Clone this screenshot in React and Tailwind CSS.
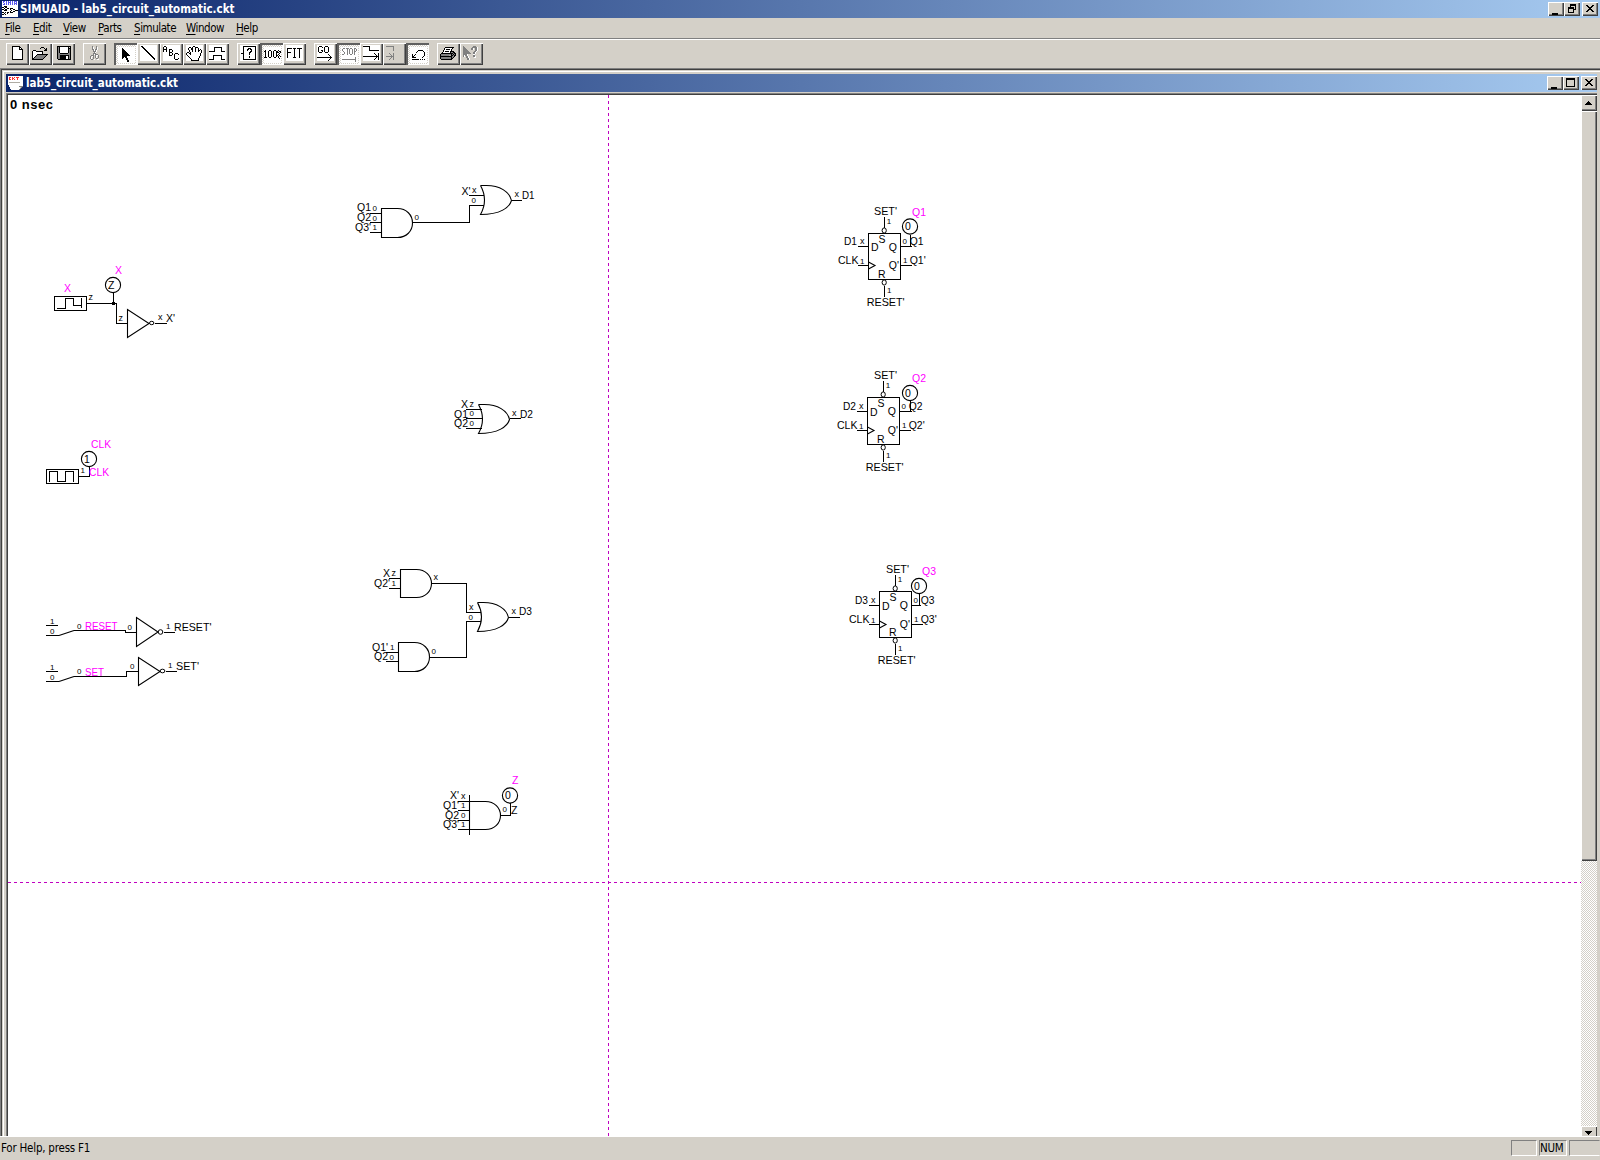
import React from "react";

const UI = "font-['DejaVu_Sans_Condensed','DejaVu_Sans',sans-serif]";

/* ---------- pixel icons ---------- */
const INK = { "#": "#000000", w: "#ffffff", g: "#808080", s: "#d4d0c8", b: "#5a5af0", r: "#ff3030", t: "#b0aca4" };

function Pix({ rows, className = "" }) {
  const w = Math.max(...rows.map((r) => r.length));
  const rects = [];
  rows.forEach((row, y) => {
    let x = 0;
    while (x < row.length) {
      const c = row[x];
      let n = 1;
      while (x + n < row.length && row[x + n] === c) n++;
      if (INK[c]) rects.push(<rect key={x + "-" + y} x={x} y={y} width={n} height="1" fill={INK[c]} />);
      x += n;
    }
  });
  return (
    <svg width={w} height={rows.length} viewBox={`0 0 ${w} ${rows.length}`} shapeRendering="crispEdges" className={"block shrink-0 " + className}>
      {rects}
    </svg>
  );
}

const ICONS = {
  new: [
    "########...",
    "#wwwwww##..",
    "#wwwwww#w#.",
    "#wwwwww####",
    "#wwwwwwwww#",
    "#wwwwwwwww#",
    "#wwwwwwwww#",
    "#wwwwwwwww#",
    "#wwwwwwwww#",
    "#wwwwwwwww#",
    "#wwwwwwwww#",
    "#wwwwwwwww#",
    "#wwwwwwwww#",
    "###########",
  ],
  open: [
    ".........###....",
    "........#...#.#.",
    ".............##.",
    ".###........###.",
    "#www#######.....",
    "#wwwwwwwww#.....",
    "#wwwwwwwww#.....",
    "#wwww###########",
    "#www#ggggggggg#.",
    "#ww#ggggggggg#..",
    "#w#ggggggggg#...",
    "##ggggggggg#....",
    "###########.....",
  ],
  save: [
    "##############",
    "#g#wwwwwwww#s#",
    "#g#wwwwwwww###",
    "#g#wwwwwwww#g#",
    "#g#wwwwwwww#g#",
    "#g#wwwwwwww#g#",
    "#g#wwwwwwww#g#",
    "#gg########gg#",
    "#gggggggggggg#",
    "#gg#########g#",
    "#gg######ww#g#",
    "#gg######ww#g#",
    "#gg######ww#g#",
    ".#############",
  ],
  cut: [
    "..g...g..",
    "..gw..gw.",
    "..gw..gw.",
    "..ggwggw.",
    "...gwgw..",
    "...gggw..",
    "....gw...",
    "...ggg...",
    "...gwggg.",
    ".ggg.gwwg",
    "g.wg.gw.g",
    "gw.g.gw.g",
    "gw.g..gg.",
    ".gg.w..ww",
  ],
  arrow: [
    "#........",
    "##.......",
    "###......",
    "####.....",
    "#####....",
    "######...",
    "#######..",
    "########.",
    "#####....",
    "##.##....",
    "#...##...",
    "....##...",
    ".....##..",
    ".....##..",
  ],
  line: [
    "##............",
    ".##...........",
    "..##..........",
    "...##.........",
    "....##........",
    ".....##.......",
    "......##......",
    ".......##.....",
    "........##....",
    ".........##...",
    "..........##..",
    "...........##.",
    "............##",
    ".............#",
  ],
  abc: [
    ".##.............",
    "#..#............",
    "#..#............",
    "####..###.......",
    "#..#..#..#......",
    "#..#..#..#......",
    "......###.......",
    "......#..#..###.",
    "......#..#.#...#",
    "......###..#....",
    "...........#....",
    "...........#....",
    "...........#...#",
    "............###.",
  ],
  hand: [
    ".......##.......",
    "...##.#ww###....",
    "..#ww##ww#ww#...",
    "..#ww##ww#ww#.#.",
    "...#ww#ww#ww##w#",
    "...#ww#ww#ww#ww#",
    ".##.#wwwwwwwwww#",
    "#ww##wwwwwwwww#.",
    "#www#wwwwwwwww#.",
    ".#wwwwwwwwwwww#.",
    "..#wwwwwwwwww#..",
    "...#wwwwwwwww#..",
    "....#wwwwwww#...",
    ".....#wwwwww#...",
    ".....########...",
  ],
  wave: [
    ".....########...",
    ".....#......#...",
    ".....#......#...",
    ".....#......#...",
    "######......####",
    "................",
    "................",
    "................",
    "....#########...",
    "....#.......#...",
    "....#.......#...",
    "....#.......#...",
    "#####.......####",
  ],
  probe: [
    "..#############",
    "..#...........#",
    "..#....###....#",
    "..#...##.##...#",
    "..#...#...#...#",
    "..#......##...#",
    "..#.....##....#",
    "###.....#.....#",
    "..#.....#.....#",
    "..#...........#",
    "..#.....#.....#",
    "..#.....#.....#",
    "..#...........#",
    "..#############",
  ],
  hundred: [
    ".#...##...##..#..",
    "##..#..#.#..##.##",
    ".#..#..#.#..###.#",
    ".#..#..#.#..#..#.",
    ".#..#..#.#..#.#..",
    ".#..#..#.#..##.#.",
    ".#..#..#.#..#.#.#",
    "###..##...##..#..",
    "...............#.",
  ],
  fit: [
    "#####.###.#####",
    "#......#....#..",
    "#......#....#..",
    "#......#....#..",
    "####...#....#..",
    "#......#....#..",
    "#......#....#..",
    "#......#....#..",
    "#......#....#..",
    "#.....###...#..",
  ],
  go: [
    "..###...###.....",
    ".#...#.#...#....",
    ".#.....#...#....",
    ".#.....#...#....",
    ".#..##.#...#....",
    ".#...#.#...#....",
    "..###...###.....",
    "................",
    "...........#....",
    "............#...",
    ".............#..",
    "###############.",
    ".............#..",
    "............#...",
    "...........#....",
  ],
  stop: [
    ".gg.ggg.gg..gg.",
    "g....g.g..g.g.g",
    "g....g.g..g.g.g",
    ".g...g.g..g.gg.",
    "..g..g.g..g.g..",
    "..g..g.g..g.g..",
    "gg...g..gg..g..",
    "...............",
    "...............",
    ".............g.",
    ".............g.",
    "gggggggggggggg.",
    ".............g.",
    ".............g.",
  ],
  step: [
    "#######.........",
    "......#.........",
    "......#.........",
    "......#.........",
    "......##########",
    "................",
    "................",
    "...........#...#",
    "............#..#",
    ".............#.#",
    "################",
    ".............#.#",
    "............#..#",
    "...........#...#",
  ],
  stepOff: [
    "gggggggg........",
    ".......g........",
    ".......g........",
    ".......g........",
    ".......g........",
    "................",
    "................",
    "...g...g........",
    "....g..g........",
    ".....g.g........",
    "gggggggg........",
    ".....g.g........",
    "....g..g........",
    "...g...g........",
  ],
  undo: [
    "......#####...",
    ".....#.....#..",
    "....#.......#.",
    "............#.",
    "#..#........#.",
    "#.#.........#.",
    "##.........#..",
    "####......#...",
    "..............",
    "#######.#.#.#.",
  ],
  print: [
    ".....#########..",
    "....#wwwwwww#...",
    "....#w####w#....",
    "...#wwwwwww#....",
    "...#w####w####..",
    "..#wwwwwww#gg##.",
    ".############g##",
    "#gggggggggg#g#g#",
    "#ggggggggtt##g##",
    "############gg#.",
    "#gggggggggg#g#..",
    "#gggggggggg##...",
    ".###########....",
  ],
  help: [
    "g.........ggg...",
    "gg.......gggggw.",
    "ggg.....ggw.ggw.",
    "gggg....ggw.ggw.",
    "ggggg.......ggw.",
    "gggggg.....ggw..",
    "ggggggg...ggw...",
    "gggggggg..ggw...",
    "ggggw.....ww....",
    "gwggw.....gg....",
    "gw.ggw....ggw...",
    "...ggw.....ww...",
    "....ggw.........",
    "....ggw.........",
  ],
  min: ["......", "......", "......", "......", "......", "######", "######"],
  max: [
    "#########",
    "#########",
    "#.......#",
    "#.......#",
    "#.......#",
    "#.......#",
    "#.......#",
    "#.......#",
    "#########",
  ],
  restore: [
    "..######",
    "..######",
    "..#....#",
    "######.#",
    "######.#",
    "#....###",
    "#....#..",
    "#....#..",
    "######..",
  ],
  close: ["##....##", ".##..##.", "..####..", "...##...", "..####..", ".##..##.", "##....##"],
  up: ["...#...", "..###..", ".#####.", "#######"],
  down: ["#######", ".#####.", "..###..", "...#..."],
  app: [
    "wbbwbwbwbwbwbbbw",
    "wbwwbwbbbwbwbwbw",
    "wwbwbwbwbwbwbbbw",
    "wbbwbwbwbwbwbwbw",
    "wwwwwwwwwwwwwwww",
    "ww###wwwwwwwwwww",
    "##w##wwwwwwwwwww",
    "ww#ww##w###wwwww",
    "##w##www#ww##www",
    "ww###wwww#www###",
    "wwwwwwww#ww##www",
    "##w#w##w###wwwww",
    "ww#ww#wwwwwwwwww",
    "##w#wwwwwwwwwwww",
    "wwwwwwwwwwwwwwww",
    "wwwwwwwwwwwwwwww",
  ],
  doc: [
    "wwwwwwwwwwwwwww",
    "wrrwrwrwrrrwwww",
    "wrwwrrwwwrwwwww",
    "wrrwrwrwwrwwwww",
    "wwwwwwwwwwwwwww",
    "wwwwwwwwwwwwwww",
    "wtttttttttttwww",
    "wwwwwwwwwwwwwww",
    "wwwwwwwwwwwwwww",
    ".wwwwwwwwwwwwww",
    ".wwwwwwwwwwgggg",
    "..wwwwwwwwwwsg.",
    "..wwwwwwwwwwg..",
    "...wwwwwwwwg...",
  ],
};

/* ---------- window chrome ---------- */
const RAISED =
  "bg-[#d4d0c8] shadow-[inset_1px_1px_0_#ffffff,inset_-1px_-1px_0_#404040,inset_-2px_-2px_0_#808080]";
const DITHER = "bg-[repeating-conic-gradient(#ffffff_0_25%,#d4d0c8_0_50%)] bg-[length:2px_2px]";

function CaptionButton({ icon, align = "items-center justify-center" }) {
  return (
    <div className={`flex h-[14px] w-4 pb-px pr-px ${align} ${RAISED}`}>
      <Pix rows={ICONS[icon]} />
    </div>
  );
}

function CaptionButtons({ middle }) {
  return (
    <div className="flex">
      <CaptionButton icon="min" align="items-end justify-start pl-1 pb-[3px]" />
      <CaptionButton icon={middle} />
      <div className="w-0.5" />
      <CaptionButton icon="close" />
    </div>
  );
}

function ToolButton({ icon, down, plain, nudge }) {
  if (down) {
    return (
      <div className={`flex h-[22px] w-[23px] items-center justify-center pl-0.5 pt-px ${DITHER} shadow-[inset_2px_2px_0_#606060,inset_-1px_-1px_0_#ffffff]`}>
        <div className="flex h-4 w-[17px] items-center justify-center bg-white">
          <Pix rows={ICONS[icon]} />
        </div>
      </div>
    );
  }
  return (
    <div className={`flex h-[22px] w-[23px] items-center justify-center pb-0.5 pr-px ${RAISED}`}>
      <div className={`flex h-4 w-[17px] items-center justify-center ${plain ? "" : "bg-white"} ${nudge ? "pl-0.5" : ""}`}>
        <Pix rows={ICONS[icon]} />
      </div>
    </div>
  );
}

function Toolbar() {
  return (
    <div className="flex h-7 gap-2 pl-1.5 pt-[3px]">
      <div className="flex">
        <ToolButton icon="new" plain />
        <ToolButton icon="open" plain />
        <ToolButton icon="save" plain nudge />
      </div>
      <div className="flex">
        <ToolButton icon="cut" plain />
      </div>
      <div className="flex">
        <ToolButton icon="arrow" down />
        <ToolButton icon="line" />
        <ToolButton icon="abc" />
        <ToolButton icon="hand" />
        <ToolButton icon="wave" />
      </div>
      <div className="flex">
        <ToolButton icon="probe" />
        <ToolButton icon="hundred" down />
        <ToolButton icon="fit" />
      </div>
      <div className="flex">
        <ToolButton icon="go" />
        <ToolButton icon="stop" down />
        <ToolButton icon="step" />
        <ToolButton icon="stepOff" plain />
        <ToolButton icon="undo" down />
      </div>
      <div className="flex">
        <ToolButton icon="print" plain />
        <ToolButton icon="help" plain />
      </div>
    </div>
  );
}

function MenuBar() {
  const items = [
    ["File", "w-[28px]"],
    ["Edit", "w-[30px]"],
    ["View", "w-[35px]"],
    ["Parts", "w-[36px]"],
    ["Simulate", "w-[52px]"],
    ["Window", "w-[50px]"],
    ["Help", "w-[30px]"],
  ];
  return (
    <div className={`flex h-5 items-center pl-[5px] text-[11.5px] leading-5 ${UI}`}>
      {items.map(([t, w]) => (
        <div key={t} className={`${w} whitespace-nowrap tracking-[-0.45px]`}>
          <span className="underline underline-offset-2">{t[0]}</span>
          {t.slice(1)}
        </div>
      ))}
    </div>
  );
}

/* ---------- schematic ---------- */
function Lbl({ x, y, children, w, pink }) {
  return (
    <text x={x} y={y} fontSize="10.5" fill={pink ? "#ff00ff" : "#000000"} textLength={w} lengthAdjust="spacingAndGlyphs">
      {children}
    </text>
  );
}

function Val({ x, y, children }) {
  const digit = children === "0" || children === "1";
  return (
    <text x={x} y={y} fontSize={digit ? 8 : 9} fill="#000">
      {children}
    </text>
  );
}

function Wire({ d }) {
  return <path d={d} fill="none" stroke="#000" strokeWidth="1" shapeRendering="crispEdges" />;
}

function Shape({ d }) {
  return <path d={d} fill="none" stroke="#000" strokeWidth="1.1" />;
}

function Probe({ x, y, v }) {
  return (
    <g>
      <circle cx={x} cy={y} r="7.6" fill="none" stroke="#000" strokeWidth="1.1" />
      <text x={x - 5} y={y + 3.5} fontSize="10.5" fill="#000">
        {v}
      </text>
    </g>
  );
}

function And({ x, y, h = 29 }) {
  const r = h / 2;
  return <Shape d={`M${x} ${y}H${x + 16}C${x + 25} ${y} ${x + 31} ${y + r * 0.45} ${x + 31} ${y + r}S${x + 25} ${y + h} ${x + 16} ${y + h}H${x}Z`} />;
}

function Or({ x, y }) {
  return (
    <Shape
      d={`M${x} ${y}H${x + 6}C${x + 19} ${y} ${x + 29} ${y + 6} ${x + 31} ${y + 15}C${x + 29} ${y + 22} ${x + 20} ${y + 29} ${x} ${y + 29}Q${x + 8} ${y + 14.5} ${x} ${y}`}
    />
  );
}

function FlipFlop({ n, x, y, h, px, py, qx, qy, drop = 0, setDx = 0 }) {
  const wy = y + 13 + drop;
  const cy = wy + 19;
  const ty = y + drop * 0.8;
  return (
    <g>
      <Wire d={`M${x} ${y}h32v${h}h-32z M${x - 11} ${wy}h11 M${x - 11} ${cy}h11 M${x + 32} ${wy}H${px + 1.5} M${x + 32} ${cy}h11 M${px + 0.5} ${wy}V${py + 8} M${x + 16} ${y - 17}v11 M${x + 16} ${y + h + 6}v11`} />
      <Shape d={`M${x} ${cy - 3.5}l6.5 3.5l-6.5 3.5`} />
      <ellipse cx={x + 15.7} cy={y - 3} rx="2.1" ry="2.6" fill="none" stroke="#000" />
      <ellipse cx={x + 15.7} cy={y + h + 3} rx="2.1" ry="2.6" fill="none" stroke="#000" />
      <Lbl x={x + 5.5 + setDx} y={y - 18.2} w={23}>SET'</Lbl>
      <Val x={x + 18.2} y={y - 9.5}>1</Val>
      <Lbl x={x + 10} y={y + 9.9}>S</Lbl>
      <Lbl x={x + 2.5} y={ty + 17.3}>D</Lbl>
      <Lbl x={x + 20.3} y={ty + 17}>Q</Lbl>
      <Lbl x={x + 20.3} y={ty + 35.2}>Q'</Lbl>
      <Lbl x={x + 9.5} y={y + h - 1.8}>R</Lbl>
      <Lbl x={x - 24.5} y={ty + 11.3} w={13}>{"D" + n}</Lbl>
      <Val x={x - 8.5} y={ty + 10.7}>x</Val>
      <Lbl x={x - 30.5} y={ty + 30.6} w={20.5}>CLK</Lbl>
      <Val x={x - 8.5} y={ty + 30.7}>1</Val>
      <Val x={x + 34} y={ty + 10.5}>0</Val>
      <Lbl x={x + 41.2} y={ty + 11.3} w={13.8}>{"Q" + n}</Lbl>
      <Val x={x + 34.5} y={ty + 29.5}>1</Val>
      <Lbl x={x + 41.2} y={ty + 30.4} w={16}>{"Q" + n + "'"}</Lbl>
      <Val x={x + 18.5} y={y + h + 13.3}>1</Val>
      <Lbl x={x - 1.8} y={y + h + 26.4} w={38}>RESET'</Lbl>
      <Probe x={px} y={py} v="0" />
      <Lbl x={qx} y={qy} w={14} pink>{"Q" + n}</Lbl>
    </g>
  );
}

function Schematic() {
  return (
    <svg width="1573" height="1041" viewBox="8 95 1573 1041" className="block font-['Liberation_Sans',Arial,sans-serif]">
      <g stroke="#c000c0" strokeWidth="1" strokeDasharray="3 3" shapeRendering="crispEdges">
        <path d="M608.5 95V1136" />
        <path d="M8 882.5H1581" />
      </g>

      <Wire d="M54.5 296.5h32v14h-32z M57 308.5H65.5V298.5H73.5V305.5H81.5 M81.5 298V308 M87 303.5H116.5V323.5H127.5 M113.5 293V303 M155 323.5H167" />
      <rect x="112" y="302" width="3" height="3" />
      <Shape d="M127.5 309.5V337.5L149 323.5Z" />
      <ellipse cx="151.7" cy="323" rx="2.2" ry="1.7" fill="none" stroke="#000" />
      <Lbl x={64} y={291.5} pink>X</Lbl>
      <Lbl x={115} y={273.5} pink>X</Lbl>
      <Probe x={113} y={285} v="Z" />
      <Val x={88.5} y={300}>z</Val>
      <Val x={118.5} y={321}>z</Val>
      <Val x={158} y={320}>x</Val>
      <Lbl x={166} y={322.3}>X'</Lbl>

      <Wire d="M46.5 469.5h32v14h-32z M49.5 482V471.5H57.5V481.5H65.5V471.5H73.5V482 M79 476.5H89.5V467" />
      <Probe x={89} y={459} v="1" />
      <Lbl x={91} y={448} w={20} pink>CLK</Lbl>
      <Lbl x={89} y={476} w={20} pink>CLK</Lbl>
      <Val x={80.5} y={473}>1</Val>

      <Wire d="M46 625.5H58 M46 635.5H59 M74 630.5H125.5V632.5H136.5 M164 632.5H175" />
      <Shape d="M59 635.5L74 630.5 M136.5 617.5V646.5L158 632Z" />
      <circle cx="160.5" cy="632" r="2.3" fill="none" stroke="#000" />
      <Val x={50} y={624.3}>1</Val>
      <Val x={50} y={634}>0</Val>
      <Val x={77} y={628.5}>0</Val>
      <Lbl x={85} y={630} w={32.5} pink>RESET</Lbl>
      <Val x={127.5} y={630}>0</Val>
      <Val x={166} y={629}>1</Val>
      <Lbl x={174} y={631.3} w={37.5}>RESET'</Lbl>

      <Wire d="M46 671.5H58 M46 681.5H59 M74 676.5H126.5V671.5H138.5 M166 671.5H177" />
      <Shape d="M59 681.5L74 676.5 M138.5 657.5V685.5L160 671.5Z" />
      <ellipse cx="162.5" cy="671" rx="2.4" ry="1.8" fill="none" stroke="#000" />
      <Val x={50} y={670}>1</Val>
      <Val x={50} y={679.5}>0</Val>
      <Val x={77} y={673.5}>0</Val>
      <Lbl x={85} y={676} w={19} pink>SET</Lbl>
      <Val x={130} y={669}>0</Val>
      <Val x={168} y={668}>1</Val>
      <Lbl x={176} y={670.3} w={23}>SET'</Lbl>

      <And x={381.5} y={208.5} />
      <Wire d="M370 213.5H381 M370 222.5H381 M370 232.5H381 M413 222.5H469.5V205.5H484 M469 195.5H484 M512 200.5H522" />
      <Lbl x={357} y={211.3}>Q1</Lbl>
      <Lbl x={357} y={221.3}>Q2</Lbl>
      <Lbl x={355} y={231.3}>Q3'</Lbl>
      <Val x={372.5} y={211}>0</Val>
      <Val x={372.5} y={220.5}>0</Val>
      <Val x={372.5} y={230}>1</Val>
      <Val x={414.5} y={219.7}>0</Val>
      <Or x={480.5} y={185.5} />
      <Lbl x={461.5} y={194.6}>X'</Lbl>
      <Val x={472} y={193}>x</Val>
      <Val x={471.5} y={203}>0</Val>
      <Val x={514.5} y={197}>x</Val>
      <Lbl x={522} y={199} w={12.5}>D1</Lbl>

      <Or x={478.5} y={404.5} />
      <Wire d="M466 409.5H482 M466 418.5H482 M466 428.5H482 M510 418.5H521" />
      <Lbl x={461} y={407.5}>X</Lbl>
      <Lbl x={454} y={417.5}>Q1</Lbl>
      <Lbl x={454} y={427.3}>Q2</Lbl>
      <Val x={469.5} y={406.5}>z</Val>
      <Val x={469.5} y={416}>0</Val>
      <Val x={469.5} y={426}>0</Val>
      <Val x={512} y={416}>x</Val>
      <Lbl x={520} y={417.5} w={13}>D2</Lbl>

      <And x={400.5} y={569.5} h={28} />
      <Wire d="M389 578.5H400 M389 588.5H400 M432 583.5H466.5V612.5H481 M430 657.5H466.5V621.5H481 M509 617.5H520 M386 652.5H398 M386 661.5H398" />
      <Lbl x={383} y={577}>X</Lbl>
      <Lbl x={374} y={587}>Q2'</Lbl>
      <Val x={391.5} y={576}>z</Val>
      <Val x={391.5} y={586}>1</Val>
      <Val x={433.5} y={580}>x</Val>
      <And x={398.5} y={642.5} />
      <Lbl x={372} y={651}>Q1'</Lbl>
      <Lbl x={374} y={660.3}>Q2</Lbl>
      <Val x={390} y={650}>1</Val>
      <Val x={389.5} y={660}>0</Val>
      <Val x={431.5} y={653.7}>0</Val>
      <Or x={477.5} y={602.5} />
      <Val x={469} y={610}>x</Val>
      <Val x={468.5} y={620}>0</Val>
      <Val x={511.5} y={614}>x</Val>
      <Lbl x={519} y={615.3} w={13}>D3</Lbl>

      <And x={469.5} y={801.5} h={28} />
      <Wire d="M469.5 795V835 M458 801.5H469 M458 810.5H469 M458 820.5H469 M458 829.5H469 M500 815.5H510.5V803" />
      <Lbl x={450} y={799.3}>X'</Lbl>
      <Lbl x={443} y={809.3}>Q1'</Lbl>
      <Lbl x={445} y={819}>Q2</Lbl>
      <Lbl x={443} y={828.3}>Q3'</Lbl>
      <Val x={461} y={799}>x</Val>
      <Val x={461} y={807.7}>1</Val>
      <Val x={461} y={817.7}>0</Val>
      <Val x={461} y={827.3}>1</Val>
      <Probe x={510} y={795.5} v="0" />
      <Lbl x={512} y={784} pink>Z</Lbl>
      <Val x={502.5} y={812}>0</Val>
      <Lbl x={511} y={814.3}>Z</Lbl>

      <FlipFlop n={1} x={868.5} y={233.5} h={46} px={910} py={226.5} qx={912} qy={215.7} />
      <FlipFlop n={2} x={867.5} y={397.5} h={47} px={910} py={393} qx={912} qy={381.7} drop={1} setDx={1} />
      <FlipFlop n={3} x={879.5} y={591.5} h={46} px={919} py={586} qx={922} qy={575} drop={1} setDx={1} />
    </svg>
  );
}

function ScrollBar() {
  return (
    <div className={`flex h-[1041px] w-4 flex-col ${DITHER}`}>
      <div className={`flex h-4 w-4 items-center justify-center pr-0.5 ${RAISED}`}>
        <Pix rows={ICONS.up} />
      </div>
      <div className={`h-[750px] w-4 ${RAISED}`} />
      <div className="grow" />
      <div className="flex h-2.5 w-4 justify-center bg-[#d4d0c8] pr-0.5 pt-[5px] shadow-[inset_1px_1px_0_#ffffff,inset_-1px_0_0_#404040]">
        <Pix rows={ICONS.down} />
      </div>
    </div>
  );
}

const BAR = "bg-[linear-gradient(90deg,#0a246a,#a6caf0)] text-white font-bold";

export default function App() {
  return (
    <div className="flex h-[1160px] w-[1600px] flex-col overflow-hidden bg-[#d4d0c8] text-black">
      <div className={`flex h-[18px] items-center justify-between pl-0.5 pr-0.5 ${BAR}`}>
        <div className="flex items-center gap-0.5">
          <Pix rows={ICONS.app} />
          <span className={`whitespace-nowrap text-[11.5px] leading-[18px] ${UI}`}>SIMUAID - lab5_circuit_automatic.ckt</span>
        </div>
        <CaptionButtons middle="restore" />
      </div>

      <MenuBar />
      <div className="h-0.5 border-b border-t border-b-white border-t-[#808080]" />
      <Toolbar />

      <div className="flex h-[1068px] border-l border-t border-[#808080]">
        <div className="flex grow border-l border-t border-[#404040] bg-[#d4d0c8] pl-px pt-px">
          <div className="flex grow flex-col border-l border-t border-white pl-0.5 pr-[3px] pt-0.5">
            <div className={`flex h-[18px] items-center justify-between pl-0.5 ${BAR}`}>
              <div className="flex items-center gap-[3px]">
                <Pix rows={ICONS.doc} />
                <span className={`whitespace-nowrap text-[11.5px] leading-[18px] tracking-[-0.04px] ${UI}`}>lab5_circuit_automatic.ckt</span>
              </div>
              <CaptionButtons middle="max" />
            </div>
            <div className="mt-px border-l border-t border-[#808080]">
              <div className="border-l border-t border-[#404040]">
                <div className="relative flex bg-white">
                  <div className="absolute left-[2px] top-[2px] whitespace-pre font-['Liberation_Sans',Arial,sans-serif] text-[13px] font-bold leading-4 tracking-[0.5px]">0 nsec</div>
                  <Schematic />
                  <ScrollBar />
                </div>
              </div>
            </div>
          </div>
        </div>
      </div>

      <div className={`flex h-[24px] items-start justify-between border-t border-white text-[11.5px] ${UI}`}>
        <div className="pl-px leading-[22px] tracking-[-0.22px]">For Help, press F1</div>
        <div className="flex gap-0.5 pt-[3px]">
          <div className="h-4 w-[26px] border border-b-white border-l-[#808080] border-r-white border-t-[#808080]" />
          <div className="h-4 w-7 whitespace-nowrap border border-b-white border-l-[#808080] border-r-white border-t-[#808080] leading-[15px] tracking-[-0.3px]">NUM</div>
          <div className="h-4 w-[31px] border border-b-white border-l-[#808080] border-r-transparent border-t-[#808080]" />
        </div>
      </div>
    </div>
  );
}
